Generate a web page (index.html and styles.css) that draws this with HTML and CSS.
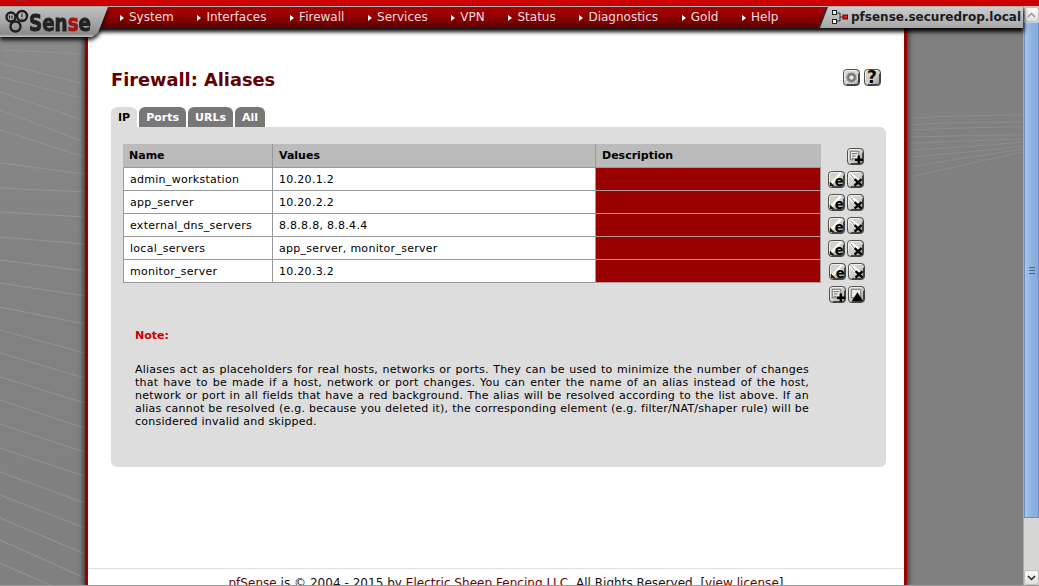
FILE: index.html
```html
<!DOCTYPE html>
<html lang="en">
<head>
<meta charset="utf-8">
<title>pfSense.securedrop.local - Firewall: Aliases</title>
<link rel="stylesheet" href="styles.css">
</head>
<body>
<svg class="defs" width="0" height="0" aria-hidden="true">
  <defs>
    <linearGradient id="bevel" x1="0" y1="0" x2="1" y2="1">
      <stop offset="0" stop-color="#d0d0c8"/>
      <stop offset=".5" stop-color="#d4d4cc"/>
      <stop offset="1" stop-color="#94948c"/>
    </linearGradient>
    <symbol id="base" viewBox="0 0 18 18">
      <rect x=".5" y=".5" width="17" height="17" rx="3.5" fill="url(#bevel)" stroke="#3a3a36"/>
      <path d="M1.500 12V4Q1.500 1.500 4 1.500H14" fill="none" stroke="#fff" stroke-opacity=".75"/>
      <path d="M16.500 5V14Q16.500 16.500 14 16.500H4" fill="none" stroke="#333"/>
    </symbol>
    <symbol id="i-add" viewBox="0 0 18 18">
      <use href="#base"/>
      <path d="M3.500 3.500h9v9h-9z" fill="#ecece6" stroke="#555" stroke-width=".8"/>
      <path d="M5 6h6M5 8.500h4M5 11h3" stroke="#666"/>
      <path d="M12.500 8v8.500M8.500 12.500h8.500" stroke="#000" stroke-width="2.600"/>
    </symbol>
    <symbol id="i-edit" viewBox="0 0 18 18">
      <use href="#base"/>
      <path d="M2 13 12 2h3L3 16z" fill="#fff"/>
      <path d="M2 16V11L7 16z" fill="#1c1c1c"/>
      <text x="7.200" y="15.400" class="ico-letter">e</text>
    </symbol>
    <symbol id="i-del" viewBox="0 0 18 18">
      <use href="#base"/>
      <path d="M5 2 13 8.500 9 12 2 5z" fill="#fff"/>
      <path d="M4 4 8 9" stroke="#777"/>
      <path d="M8 8.500 15.500 15.500M15.500 8.500 8 15.500" stroke="#000" stroke-width="2.500"/>
    </symbol>
    <symbol id="i-up" viewBox="0 0 18 18">
      <use href="#base"/>
      <path d="M3.500 3.500h10v9h-10z" fill="#ecece6" stroke="#555" stroke-width=".8"/>
      <path d="M10 6.500 16 16H4z" fill="#000"/>
    </symbol>
    <symbol id="i-gear" viewBox="0 0 18 18">
      <use href="#base"/>
      <circle cx="9" cy="9" r="6.200" fill="#8c8c86" stroke="#e4e4de" stroke-width="1.600" stroke-dasharray="2.400 .8"/>
      <circle cx="9" cy="9" r="3" fill="#e8e8e4" stroke="#4a4a46" stroke-width="1"/>
    </symbol>
    <symbol id="i-help" viewBox="0 0 18 18">
      <use href="#base"/>
      <text x="3.300" y="15.200" class="ico-q">?</text>
    </symbol>
  </defs>
</svg>

<div class="strip"><span class="strip-mark"></span></div>

<div class="viewport">
  <div class="page">
    <header class="header">
      <a class="logo" href="#">
        <span class="logo-shape">
          <svg width="110" height="30" viewBox="0 0 110 30" aria-label="pfSense logo">
            <g fill="none" stroke="#1e1e1e" stroke-width="2.400">
              <circle cx="11" cy="10" r="4.500"/>
              <circle cx="22" cy="9" r="5"/>
              <circle cx="15.500" cy="19.500" r="5"/>
            </g>
            <path d="M22 6.500v3.500M22 11.500v1M9.500 8.500v3M12 8.500v3" stroke="#222" stroke-width="1.200"/>
            <text x="29" y="24" class="logo-text" textLength="62" lengthAdjust="spacingAndGlyphs">Sen<tspan class="logo-red">s</tspan>e</text>
          </svg>
        </span>
      </a>
      <nav class="nav">
        <a class="nav-item" href="#">System</a>
        <a class="nav-item" href="#">Interfaces</a>
        <a class="nav-item" href="#">Firewall</a>
        <a class="nav-item" href="#">Services</a>
        <a class="nav-item" href="#">VPN</a>
        <a class="nav-item" href="#">Status</a>
        <a class="nav-item" href="#">Diagnostics</a>
        <a class="nav-item" href="#">Gold</a>
        <a class="nav-item" href="#">Help</a>
      </nav>
      <div class="host">
        <div class="host-inner">
          <svg class="host-icon" width="16" height="15" viewBox="0 0 16 15" aria-hidden="true">
            <path d="M5 3H8V11H5M8 7H12" fill="none" stroke="#333"/>
            <rect x=".5" y=".5" width="4" height="4" fill="#eee" stroke="#222"/>
            <rect x=".5" y="9.500" width="4" height="4" fill="#eee" stroke="#222"/>
            <rect x="11" y="5" width="4.500" height="4" fill="#d22" stroke="#600"/>
          </svg>
          <span class="host-name">pfsense.securedrop.local</span>
        </div>
      </div>
    </header>

    <div class="main">
      <div class="gutter gutter-left">
        <svg width="85" height="560" viewBox="0 28 85 560" aria-hidden="true">
          <path class="swirl" d="M3 50 85 54M0 63 85 84M0 77 85 99M0 92 85 121M0 110 85 142M0 130 85 157M0 163 85 174M0 188 85 192M0 212 85 217M0 237 85 244M0 260 85 271M0 283 85 296M0 307 85 324M0 330 85 353M0 353 85 378M0 377 85 403M0 400 85 428M0 424 85 452M0 448 85 476M0 472 85 503M0 495 85 528M0 518 85 554M0 540 85 578M0 563 50 585"/>
        </svg>
      </div>

      <main class="wrapper">
        <div class="title-row">
          <h1 class="title">Firewall: Aliases</h1>
          <div class="title-icons">
            <svg class="ico" viewBox="0 0 18 18"><use href="#i-gear"/></svg>
            <svg class="ico" viewBox="0 0 18 18"><use href="#i-help"/></svg>
          </div>
        </div>

        <div class="tabs">
          <a class="tab tab-active" href="#">IP</a>
          <a class="tab" href="#">Ports</a>
          <a class="tab" href="#">URLs</a>
          <a class="tab" href="#">All</a>
        </div>

        <section class="panel">
          <table class="aliases">
            <colgroup>
              <col class="col-name"><col class="col-values"><col class="col-desc"><col class="col-act">
            </colgroup>
            <thead>
              <tr>
                <th>Name</th><th>Values</th><th>Description</th>
                <td class="act"><div class="act-in"><svg class="ico" viewBox="0 0 18 18"><use href="#i-add"/></svg></div></td>
              </tr>
            </thead>
            <tbody>
              <tr>
                <td class="cell">admin_workstation</td><td class="cell">10.20.1.2</td><td class="cell desc"></td>
                <td class="act"><div class="act-in"><svg class="ico" viewBox="0 0 18 18"><use href="#i-edit"/></svg><svg class="ico" viewBox="0 0 18 18"><use href="#i-del"/></svg></div></td>
              </tr>
              <tr>
                <td class="cell">app_server</td><td class="cell">10.20.2.2</td><td class="cell desc"></td>
                <td class="act"><div class="act-in"><svg class="ico" viewBox="0 0 18 18"><use href="#i-edit"/></svg><svg class="ico" viewBox="0 0 18 18"><use href="#i-del"/></svg></div></td>
              </tr>
              <tr>
                <td class="cell">external_dns_servers</td><td class="cell">8.8.8.8, 8.8.4.4</td><td class="cell desc"></td>
                <td class="act"><div class="act-in"><svg class="ico" viewBox="0 0 18 18"><use href="#i-edit"/></svg><svg class="ico" viewBox="0 0 18 18"><use href="#i-del"/></svg></div></td>
              </tr>
              <tr>
                <td class="cell">local_servers</td><td class="cell">app_server, monitor_server</td><td class="cell desc"></td>
                <td class="act"><div class="act-in"><svg class="ico" viewBox="0 0 18 18"><use href="#i-edit"/></svg><svg class="ico" viewBox="0 0 18 18"><use href="#i-del"/></svg></div></td>
              </tr>
              <tr>
                <td class="cell">monitor_server</td><td class="cell">10.20.3.2</td><td class="cell desc"></td>
                <td class="act"><div class="act-in"><svg class="ico" viewBox="0 0 18 18"><use href="#i-edit"/></svg><svg class="ico" viewBox="0 0 18 18"><use href="#i-del"/></svg></div></td>
              </tr>
              <tr>
                <td class="blank" colspan="3"></td>
                <td class="act"><div class="act-in"><svg class="ico" viewBox="0 0 18 18"><use href="#i-add"/></svg><svg class="ico" viewBox="0 0 18 18"><use href="#i-up"/></svg></div></td>
              </tr>
            </tbody>
          </table>

          <div class="note">
            <p class="note-label">Note:</p>
            <p class="note-text">Aliases act as placeholders for real hosts, networks or ports. They can be used to minimize the number of changes that have to be made if a host, network or port changes. You can enter the name of an alias instead of the host, network or port in all fields that have a red background. The alias will be resolved according to the list above. If an alias cannot be resolved (e.g. because you deleted it), the corresponding element (e.g. filter/NAT/shaper rule) will be considered invalid and skipped.</p>
          </div>
        </section>

        <footer class="footer">
          <a href="#">pfSense</a> is © 2004 - 2015 by <a href="#">Electric Sheep Fencing LLC</a>. All Rights Reserved. [<a href="#">view license</a>]
        </footer>
      </main>

      <div class="gutter gutter-right">
        <svg width="116" height="560" viewBox="907 28 116 560" aria-hidden="true">
          <path class="swirl swirl-faint" d="M910 118C950 116 990 115 1023 115M910 125C950 122 990 122 1023 122M910 130C950 128 990 127 1023 127M910 137C950 136 990 135 1023 135M910 143C950 142 990 140 1023 139M910 150C950 148 990 145 1023 142M910 157C950 154 990 150 1023 146M910 167C950 160 990 154 1023 149M910 177C950 168 990 159 1023 152"/>
        </svg>
      </div>
    </div>
  </div>

  <aside class="scrollbar" aria-hidden="true">
    <div class="sb-btn">
      <svg width="9" height="6" viewBox="0 0 9 6"><path d="M1 5 4.500 1.500 8 5" fill="none" stroke="#999" stroke-width="1.500"/></svg>
    </div>
    <div class="sb-thumb"><span></span><span></span><span></span></div>
    <div class="sb-track"></div>
    <div class="sb-btn">
      <svg width="9" height="6" viewBox="0 0 9 6"><path d="M1 1 4.500 4.500 8 1" fill="none" stroke="#222" stroke-width="1.500"/></svg>
    </div>
  </aside>
</div>
<div class="window-edge"></div>
</body>
</html>
```
FILE: styles.css
```css
* { box-sizing: border-box; }

html, body {
  margin: 0;
  height: 586px;
  overflow: hidden;
}

body {
  display: flex;
  flex-direction: column;
  font-family: "DejaVu Sans", Verdana, sans-serif;
  font-size: 11px;
  line-height: 13px;
  color: #000;
  background: #808080;
}

a { color: inherit; text-decoration: none; }

.defs { position: absolute; }

.ico-letter { font: bold 14px "DejaVu Sans", sans-serif; fill: #000; }
.ico-q { font: bold 18px "DejaVu Sans", sans-serif; fill: #000; }

.ico { width: 17px; height: 17px; display: block; flex: none; }

/* Top strip */
.strip {
  flex: none;
  height: 7px;
  background: #cc0000;
  border-bottom: 1px solid #c8c8c8;
  padding-left: 15px;
}
.strip-mark {
  display: block;
  width: 13px;
  height: 2px;
  background: #a81818;
  border-radius: 0 0 6px 6px;
}

.viewport {
  flex: 1;
  min-height: 0;
  display: flex;
}

.page {
  flex: 1;
  min-width: 0;
  display: flex;
  flex-direction: column;
}

/* Header */
.header {
  flex: none;
  height: 21px;
  display: flex;
  align-items: flex-start;
  position: relative;
  z-index: 2;
  background: linear-gradient(#a80000 0, #960000 40%, #5c0000 100%);
  box-shadow: 0 3px 4px 1px rgba(0, 0, 0, .95);
}

.logo {
  flex: none;
  display: block;
  width: 110px;
  height: 31px;
  filter: drop-shadow(0 3px 2px rgba(0, 0, 0, .9));
}
.logo-shape {
  display: block;
  height: 30px;
  background: linear-gradient(#c0c0c0 0, #a4a4a4 55%, #8a8a8a 90%, #c0c0c0 100%);
  clip-path: polygon(0 0, 108px 0, 98px 26px, 92px 30px, 0 30px);
}
.logo-text {
  font: bold 23px "DejaVu Sans", sans-serif;
  fill: #222;
  stroke: #222;
  stroke-width: .9px;
}
.logo-red { fill: #a31414; stroke: #a31414; }

.nav {
  flex: 1;
  display: flex;
  gap: 23.700px;
  padding-left: 10px;
  height: 21px;
  align-items: center;
  font-size: 12px;
  color: #f2dcdc;
}
.nav-item {
  display: flex;
  align-items: center;
  gap: 5px;
  white-space: nowrap;
}
.nav-item::before {
  content: "";
  width: 0;
  height: 0;
  border-left: 4px solid #fff;
  border-top: 3.500px solid transparent;
  border-bottom: 3.500px solid transparent;
}

.host {
  flex: none;
  width: 205px;
  height: 21px;
  background: #2a2a2a;
  clip-path: polygon(8px 0, 100% 0, 100% 100%, 0 100%);
}
.host-inner {
  height: 21px;
  margin-left: 2px;
  padding-left: 12px;
  display: flex;
  align-items: center;
  gap: 3px;
  background: linear-gradient(#cccccc, #a8a8a8);
  clip-path: polygon(8px 0, 100% 0, 100% 100%, 0 100%);
}
.host-icon { flex: none; }
.host-name {
  font-size: 12px;
  font-weight: bold;
  color: #1c1c1c;
  white-space: nowrap;
}

/* Main columns */
.main {
  flex: 1;
  min-height: 0;
  display: flex;
  overflow: hidden;
}
.gutter { flex: none; overflow: hidden; }
.gutter svg { display: block; }
.gutter-left {
  width: 85px;
  background: linear-gradient(#8a8a8a, #828282 40%, #808080);
}
.gutter-right { width: 116px; background: #808080; }
.swirl { fill: none; stroke: #949494; stroke-width: 1; }
.swirl-faint { stroke: #8c8c8c; }

.wrapper {
  flex: none;
  width: 822px;
  position: relative;
  background: #fff;
  border-left: 3px solid #990000;
  border-right: 3px solid #990000;
  box-shadow: 0 0 6px 1px rgba(30, 30, 30, .9);
  padding-top: 42px;
}

.title-row {
  display: flex;
  justify-content: space-between;
  align-items: flex-start;
  height: 37px;
  padding: 0 23px;
}
.title {
  margin: 0;
  font-size: 17.800px;
  line-height: 20px;
  font-weight: bold;
  color: #600000;
}
.title-icons {
  display: flex;
  gap: 4px;
  margin-top: -1px;
}

.tabs {
  display: flex;
  gap: 2px;
  height: 20px;
  margin-left: 23px;
}
.tab {
  height: 20px;
  line-height: 21px;
  padding: 0 7px;
  font-weight: bold;
  color: #fff;
  background: #777;
  border-radius: 6px 6px 0 0;
}
.tab-active { background: #dddddd; color: #000; }

.panel {
  margin: 0 18px 0 23px;
  height: 340px;
  padding: 17px 12px 0;
  background: #dddddd;
  border-radius: 0 6px 6px 6px;
}

.aliases {
  border-collapse: collapse;
  table-layout: fixed;
  width: 741px;
}
.col-name { width: 149px; }
.col-values { width: 323px; }
.col-desc { width: 225px; }
.col-act { width: 44px; }

.aliases th {
  height: 23px;
  padding: 0 6px;
  text-align: left;
  font-weight: bold;
  background: #bbbbbb;
  border-left: 1px solid #999;
}
.aliases th:first-child { border-left-color: #bbb; padding-left: 5px; }
.cell {
  height: 23px;
  padding: 1px 6px 0;
  background: #fff;
  border: 1px solid #999;
  white-space: nowrap;
  letter-spacing: .28px;
}
.desc { background: #990000; border-bottom-color: #b09a9a; }
.blank { height: 23px; padding: 0; }
.act { padding: 0; height: 23px; border: 0; }
.act-in {
  display: flex;
  justify-content: flex-end;
  gap: 2px;
  padding-top: 2px;
}

.note { margin: 24px 0 0 12px; width: 674px; }
.note-label {
  margin: 0 0 21px;
  font-weight: bold;
  color: #cc0000;
}
.note-text {
  margin: 0;
  text-align: justify;
  letter-spacing: .24px;
}

.footer {
  margin-top: 101px;
  border-top: 1px solid #ddd;
  padding: 8px 0 0 20px;
  font-size: 12px;
  letter-spacing: .03px;
  text-align: center;
  white-space: nowrap;
  color: #111;
}
.footer a { color: #660000; text-decoration: underline; }

/* Scrollbar */
.scrollbar {
  flex: none;
  width: 16px;
  display: flex;
  flex-direction: column;
  background: #d6d6d2;
  border-left: 1px solid #a8a8a8;
}
.sb-btn {
  flex: none;
  height: 15px;
  display: flex;
  align-items: center;
  justify-content: center;
  background: linear-gradient(#fbfbfb, #e0e0dc);
  border: 1px solid #c0c0bc;
  border-radius: 3px;
}
.sb-thumb {
  flex: none;
  height: 496px;
  background: linear-gradient(90deg, #a9c6ea, #8bb0de 60%, #86a9da);
  border: 1px solid #6c8ec0;
  border-top-color: #c0d6f0;
  display: flex;
  flex-direction: column;
  align-items: center;
  justify-content: center;
  gap: 2px;
}
.sb-thumb span {
  width: 6px;
  height: 1px;
  background: #4d6488;
}
.sb-track { flex: 1; min-height: 0; }

.window-edge {
  flex: none;
  height: 1px;
  background: #9a9a9a;
}
```
